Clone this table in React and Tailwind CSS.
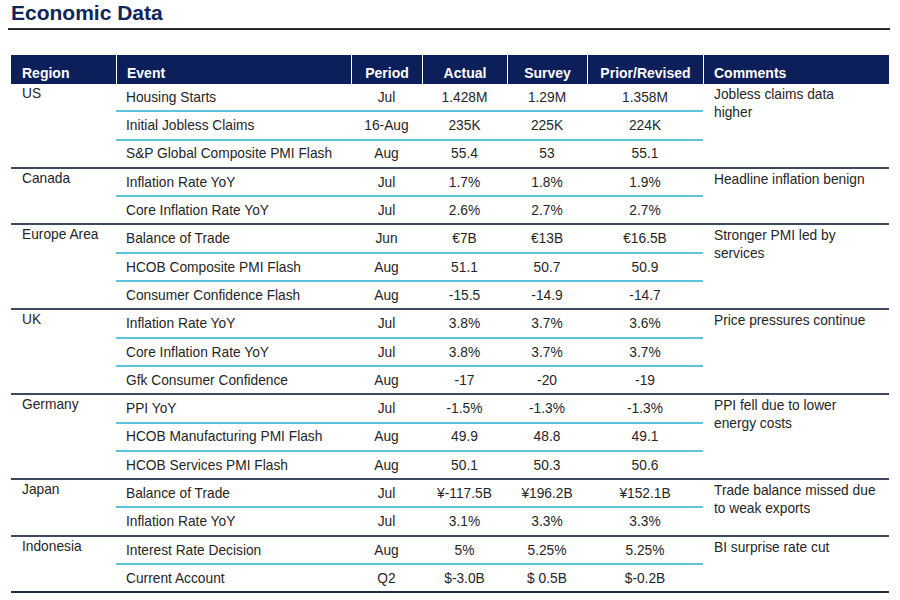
import React from "react";

const groups = [
  {
    region: "US",
    comment: ["Jobless claims data", "higher"],
    rows: [
      ["Housing Starts", "Jul", "1.428M", "1.29M", "1.358M"],
      ["Initial Jobless Claims", "16-Aug", "235K", "225K", "224K"],
      ["S&P Global Composite PMI Flash", "Aug", "55.4", "53", "55.1"],
    ],
  },
  {
    region: "Canada",
    comment: ["Headline inflation benign"],
    rows: [
      ["Inflation Rate YoY", "Jul", "1.7%", "1.8%", "1.9%"],
      ["Core Inflation Rate YoY", "Jul", "2.6%", "2.7%", "2.7%"],
    ],
  },
  {
    region: "Europe Area",
    comment: ["Stronger PMI led by", "services"],
    rows: [
      ["Balance of Trade", "Jun", "€7B", "€13B", "€16.5B"],
      ["HCOB Composite PMI Flash", "Aug", "51.1", "50.7", "50.9"],
      ["Consumer Confidence Flash", "Aug", "-15.5", "-14.9", "-14.7"],
    ],
  },
  {
    region: "UK",
    comment: ["Price pressures continue"],
    rows: [
      ["Inflation Rate YoY", "Jul", "3.8%", "3.7%", "3.6%"],
      ["Core Inflation Rate YoY", "Jul", "3.8%", "3.7%", "3.7%"],
      ["Gfk Consumer Confidence", "Aug", "-17", "-20", "-19"],
    ],
  },
  {
    region: "Germany",
    comment: ["PPI fell due to lower", "energy costs"],
    rows: [
      ["PPI YoY", "Jul", "-1.5%", "-1.3%", "-1.3%"],
      ["HCOB Manufacturing PMI Flash", "Aug", "49.9", "48.8", "49.1"],
      ["HCOB Services PMI Flash", "Aug", "50.1", "50.3", "50.6"],
    ],
  },
  {
    region: "Japan",
    comment: ["Trade balance missed due", "to weak exports"],
    rows: [
      ["Balance of Trade", "Jul", "¥-117.5B", "¥196.2B", "¥152.1B"],
      ["Inflation Rate YoY", "Jul", "3.1%", "3.3%", "3.3%"],
    ],
  },
  {
    region: "Indonesia",
    comment: ["BI surprise rate cut"],
    rows: [
      ["Interest Rate Decision", "Aug", "5%", "5.25%", "5.25%"],
      ["Current Account", "Q2", "$-3.0B", "$ 0.5B", "$-0.2B"],
    ],
  },
];

function Group({ g, last }) {
  return (
    <div
      className={
        "flex border-b-2 " + (last ? "border-[#1f2d47]" : "border-[#3a4a60]")
      }
    >
      <div className="w-[105px] pl-[11px] pt-[2px] leading-[16px]">{g.region}</div>
      <div className="w-[587px] flex flex-col">
        {g.rows.map((r, i) => {
          const isLast = i === g.rows.length - 1;
          return (
            <div
              key={i}
              className={
                "flex items-center pt-[2px] " +
                (isLast ? "h-[26.3px]" : "h-[28.3px] border-b-2 border-[#5ec3df]")
              }
            >
              <div className="w-[235px] pl-[10px] whitespace-nowrap">{r[0]}</div>
              <div className="w-[71px] text-center">{r[1]}</div>
              <div className="w-[85px] text-center">{r[2]}</div>
              <div className="w-[80px] text-center">{r[3]}</div>
              <div className="w-[116px] text-center">{r[4]}</div>
            </div>
          );
        })}
      </div>
      <div className="flex-1 pl-[11px] pt-[2px] leading-[18px]">
        {g.comment.map((c, i) => (
          <div key={i} className="whitespace-nowrap">{c}</div>
        ))}
      </div>
    </div>
  );
}

export default function App() {
  return (
    <div
      className="w-[900px] h-[600px] bg-white overflow-hidden text-[#262626]"
      style={{ fontFamily: '"Liberation Sans", Arial, sans-serif' }}
    >
      <div className="h-[28px] pl-[11px] pt-[1px] text-[21px] leading-[24px] font-bold text-[#102558]">
        Economic Data
      </div>
      <div className="ml-[8px] w-[882px] h-[2px] bg-[#2b2b2b]" />
      <div className="h-[25px]" />
      <div className="ml-[11px] w-[878px] text-[13.75px]">
        <div className="flex h-[29px] bg-[#0c1f5a] text-white font-bold text-[14px] leading-[16px]">
          <div className="w-[105px] pl-[11px] flex items-end pb-[3px]">Region</div>
          <div className="w-[235px] pl-[10px] flex items-end pb-[3px] border-l border-white">Event</div>
          <div className="w-[71px] flex items-end justify-center pb-[3px] border-l border-white">Period</div>
          <div className="w-[85px] flex items-end justify-center pb-[3px] border-l border-white">Actual</div>
          <div className="w-[80px] flex items-end justify-center pb-[3px] border-l border-white">Survey</div>
          <div className="w-[116px] flex items-end justify-center pb-[3px] border-l border-white">Prior/Revised</div>
          <div className="flex-1 pl-[10px] flex items-end pb-[3px] border-l border-white">Comments</div>
        </div>
        {groups.map((g, i) => (
          <Group key={i} g={g} last={i === groups.length - 1} />
        ))}
      </div>
    </div>
  );
}
